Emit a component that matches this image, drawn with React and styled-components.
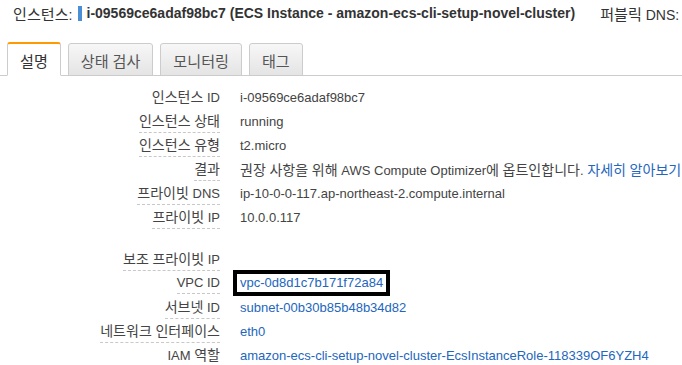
import styled, { createGlobalStyle } from "styled-components";

const GlobalStyle = createGlobalStyle`
  html, body {
    margin: 0;
    padding: 0;
    background: #fff;
    overflow: hidden;
  }
  body {
    font-family: "Liberation Sans", Arial, "Noto Sans CJK KR", sans-serif;
    color: #444;
  }
`;

// hangul in the screenshot is set a little larger than the latin text
const Hangul = styled.span`
  font-family: "Noto Sans CJK KR", sans-serif;
  font-size: 1.08em;
`;

const ko = (text) =>
  text
    .split(/([\uAC00-\uD7A3]+)/)
    .map((part, i) => (i % 2 ? <Hangul key={i}>{part}</Hangul> : part));

const Page = styled.div`
  width: 682px;
  height: 365px;
  overflow: hidden;
`;

const Header = styled.div`
  display: flex;
  align-items: center;
  height: 26px;
  padding-left: 13px;
  font-size: 14px;
  color: #333;
  white-space: nowrap;
`;

const HeaderLabel = styled.span`
  margin-left: ${(p) => p.$gap || 0}px;
`;

const Marker = styled.span`
  display: inline-block;
  width: 4px;
  height: 15px;
  background: #4a8fd6;
  margin: 0 5px 0 5px;
`;

const HeaderValue = styled.span`
  font-weight: bold;
  color: #333;
`;

const TabBar = styled.div`
  display: flex;
  align-items: flex-end;
  gap: 7px;
  margin-top: 16px;
  padding-left: 7px;
  height: 33px;
  border-bottom: 1px solid #ccc;
`;

const Tab = styled.div`
  display: flex;
  align-items: center;
  box-sizing: border-box;
  height: ${(p) => (p.$active ? 34 : 33)}px;
  padding: 0 12px;
  margin-bottom: -1px;
  font-size: 14px;
  white-space: nowrap;
  color: ${(p) => (p.$active ? "#333" : "#555")};
  border: 1px solid #ccc;
  border-top: ${(p) => (p.$active ? "2px solid #f90" : "1px solid #ccc")};
  border-bottom: ${(p) => (p.$active ? "1px solid #fff" : "1px solid #ccc")};
  border-radius: 3px 3px 0 0;
  background: ${(p) =>
    p.$active ? "#fff" : "linear-gradient(#f7f7f7, #e4e4e4)"};
`;

const Details = styled.div`
  padding-top: 9px;
`;

const Group = styled.div`
  margin-bottom: ${(p) => p.$after || 0}px;
`;

const Row = styled.div`
  display: flex;
  align-items: center;
  height: 24px;
  font-size: 13px;
  white-space: nowrap;
`;

const LabelCell = styled.div`
  width: 220px;
  flex: none;
  text-align: right;
`;

const Label = styled.span`
  display: inline-block;
  line-height: 20px;
  color: #444;
  border-bottom: 1px dashed ${(p) => (p.$plain ? "transparent" : "#c8c8c8")};
`;

const Value = styled.div`
  margin-left: 20px;
  color: #444;
`;

const Link = styled.a`
  color: #2366bd;
  text-decoration: none;
`;

const Highlight = styled.span`
  display: inline-block;
  margin-left: -7px;
  padding: 1px 3px;
  border: 4px solid #000;
  line-height: 16px;
`;

const topRows = [
  { label: "인스턴스 ID", value: "i-09569ce6adaf98bc7", plain: true },
  { label: "인스턴스 상태", value: "running" },
  { label: "인스턴스 유형", value: "t2.micro" },
  {
    label: "결과",
    value: (
      <>
        {ko("권장 사항을 위해 AWS Compute Optimizer에 옵트인합니다. ")}
        <Link href="#">{ko("자세히 알아보기")}</Link>
      </>
    ),
  },
  { label: "프라이빗 DNS", value: "ip-10-0-0-117.ap-northeast-2.compute.internal" },
  { label: "프라이빗 IP", value: "10.0.0.117" },
];

const networkRows = [
  { label: "보조 프라이빗 IP", value: "" },
  {
    label: "VPC ID",
    value: (
      <Highlight>
        <Link href="#">vpc-0d8d1c7b171f72a84</Link>
      </Highlight>
    ),
  },
  { label: "서브넷 ID", value: <Link href="#">subnet-00b30b85b48b34d82</Link> },
  { label: "네트워크 인터페이스", value: <Link href="#">eth0</Link> },
  {
    label: "IAM 역할",
    value: (
      <Link href="#">amazon-ecs-cli-setup-novel-cluster-EcsInstanceRole-118339OF6YZH4</Link>
    ),
  },
];

const DetailRows = ({ rows }) =>
  rows.map((r) => (
    <Row key={r.label}>
      <LabelCell>
        <Label $plain={r.plain}>{ko(r.label)}</Label>
      </LabelCell>
      <Value>{r.value}</Value>
    </Row>
  ));

const tabs = ["설명", "상태 검사", "모니터링", "태그"];

const App = () => {
  return (
    <Page>
      <GlobalStyle />
      <Header>
        <HeaderLabel>{ko("인스턴스:")}</HeaderLabel>
        <Marker />
        <HeaderValue>
          i-09569ce6adaf98bc7 (ECS Instance - amazon-ecs-cli-setup-novel-cluster)
        </HeaderValue>
        <HeaderLabel $gap={25}>{ko("퍼블릭 DNS:")}</HeaderLabel>
      </Header>
      <TabBar>
        {tabs.map((t, i) => (
          <Tab key={t} $active={i === 0}>
            <span>{ko(t)}</span>
          </Tab>
        ))}
      </TabBar>
      <Details>
        <Group $after={18}>
          <DetailRows rows={topRows} />
        </Group>
        <Group>
          <DetailRows rows={networkRows} />
        </Group>
      </Details>
    </Page>
  );
};

export default App;
